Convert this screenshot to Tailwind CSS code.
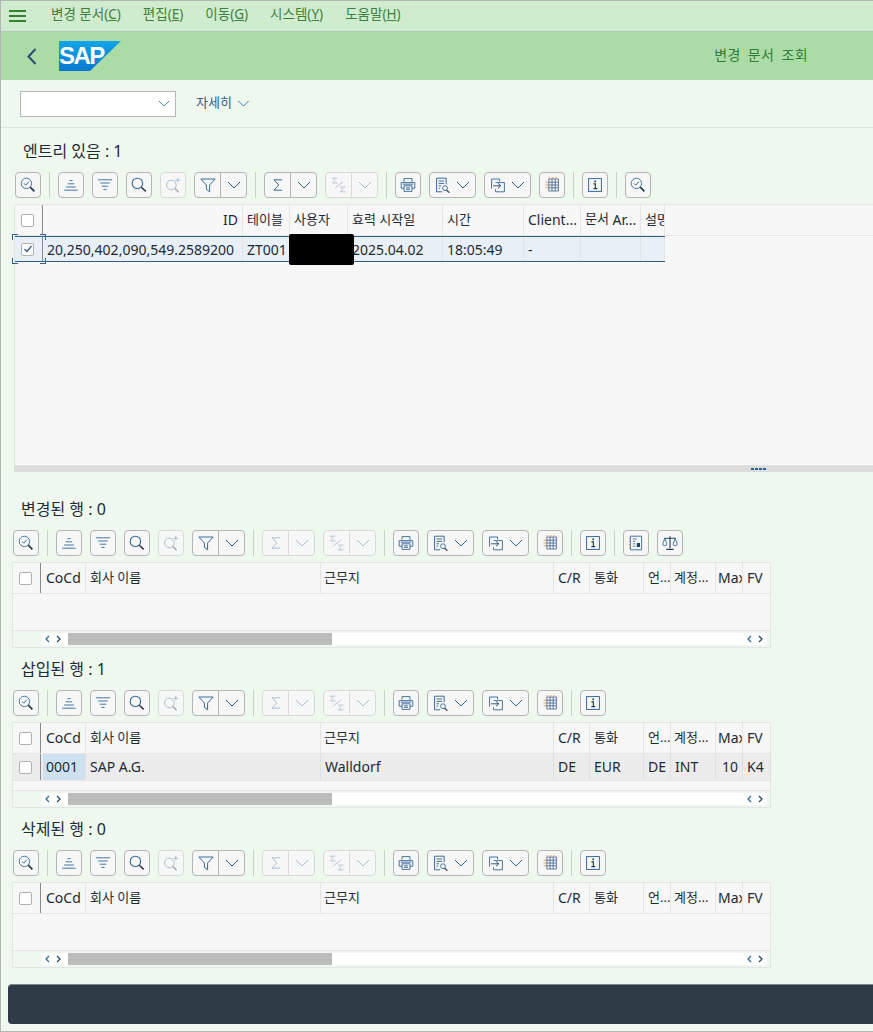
<!DOCTYPE html>
<html lang="ko">
<head>
  <meta charset="UTF-8">
  <title>변경 문서 조회</title>
  <script src="https://cdn.jsdelivr.net/npm/@tailwindcss/browser@4"></script>
</head>
<body class="bg-[#eef8ef]">
  <!-- Icon sprite -->
  <svg class="hidden">
    <symbol id="i-zoomcheck" viewBox="0 0 20 20"><circle cx="8" cy="8" r="6.5" fill="none" stroke="#2f6497" stroke-width="1.100"/><path d="M5 8l2.200 2.200L11 5.800" fill="none" stroke="#2f6497" stroke-width="1.200"/><path d="M12.800 12.800l5.200 5.200" stroke="#2b3a4a" stroke-width="2.200"/></symbol>
    <symbol id="i-asc" viewBox="0 0 20 20"><path d="M8 4.500h4M6 8.500h8M4 12.500h12M1.500 16.500h17" stroke="#2f6497" stroke-width="1.100"/></symbol>
    <symbol id="i-desc" viewBox="0 0 20 20"><path d="M1 3.500h18M4 7.500h12M6 11.500h8M8 15.500h4" stroke="#2f6497" stroke-width="1.100"/></symbol>
    <symbol id="i-search" viewBox="0 0 20 20"><circle cx="8" cy="8" r="6.500" fill="none" stroke="#2f6497" stroke-width="1.300"/><path d="M12.800 12.800l5.700 5.200" stroke="#2b3a4a" stroke-width="2"/></symbol>
    <symbol id="i-searchplus" viewBox="0 0 20 20"><circle cx="8" cy="10" r="6" fill="none" stroke="#2f6497" stroke-width="1.200"/><path d="M12.500 14.500l4.500 4.500" stroke="#2b3a4a" stroke-width="1.800"/><path d="M16 1v6M13 4h6" stroke="#2f6497" stroke-width="1.100"/></symbol>
    <symbol id="i-filter" viewBox="0 0 20 20"><path d="M1 2.500h18l-7 7.500v8.500l-4-3V10z" fill="none" stroke="#2f6497" stroke-width="1.200"/></symbol>
    <symbol id="i-chev" viewBox="0 0 14 8"><path d="M1 1l6 6 6-6" fill="none" stroke="#2f6497" stroke-width="1"/></symbol>
    <symbol id="i-sum" viewBox="0 0 20 20"><path d="M15 3.500H5l6 6.500-6 6.500h10" fill="none" stroke="#2f6497" stroke-width="1.200"/></symbol>
    <symbol id="i-subsum" viewBox="0 0 20 20"><path d="M8 1.500H2l3 3-3 3h6M18 12.500h-6l3 3-3 3h6" fill="none" stroke="#2f6497" stroke-width="1"/><path d="M5 14L15 6" stroke="#2f6497" stroke-width="1"/></symbol>
    <symbol id="i-print" viewBox="0 0 20 20"><path d="M5 6V2h10v4M5 14H1.500V7h17v7H15M5 11h10v7H5zM7.500 13.500h5M7.500 15.500h5M3.500 9h13" fill="none" stroke="#2f6497" stroke-width="1.100"/></symbol>
    <symbol id="i-list" viewBox="0 0 20 20"><path d="M9 18.500H2V1.500h12V9M4.500 5h7M4.500 8h7M4.500 11h3M4.500 14h2" fill="none" stroke="#2f6497" stroke-width="1.200"/><circle cx="12.500" cy="14" r="3" fill="none" stroke="#2f6497" stroke-width="1.100"/><path d="M14.500 16.500l3.500 3" stroke="#2b3a4a" stroke-width="1.500"/></symbol>
    <symbol id="i-export" viewBox="0 0 20 20"><path d="M2 14.500V2.500h10v3M7 7h11v11.500H7V15" fill="none" stroke="#2f6497" stroke-width="1.100"/><path d="M4 11h9M10 8l3.500 3-3.500 3" fill="none" stroke="#24405f" stroke-width="1.100"/></symbol>
    <symbol id="i-grid" viewBox="0 0 20 20"><path d="M6 2.500h12v15H6zM6 6.500h12M6 10h12M6 13.500h12M10 2.500v15M14 2.500v15" fill="none" stroke="#3c5f86" stroke-width="1"/><path d="M2 6.500h3M2 10h3M2 13.500h3M6 1h2M10 1h2M14 1h2" stroke="#e08a2e" stroke-width="1"/></symbol>
    <symbol id="i-info" viewBox="0 0 20 20"><rect x="2" y="2" width="16" height="16" fill="none" stroke="#2f6497" stroke-width="1.200"/><path d="M8 8.500h2.500v6M8 14.500h5" fill="none" stroke="#24405f" stroke-width="1.500"/><path d="M9.200 4.500h2v2h-2z" fill="#24405f"/></symbol>
    <symbol id="i-doc" viewBox="0 0 20 20"><path d="M3 1.500h14v17H3z" fill="none" stroke="#2f6497" stroke-width="1.100"/><path d="M1 4h2M1 8h2M1 12h2M1 16h2" stroke="#e08a2e" stroke-width="1.100"/><path d="M6 5h5M6 8h3M6 11h3M6 14h3" stroke="#2f6497" stroke-width="1"/><path d="M11 10h4v5h-4z" fill="#24405f"/></symbol>
    <symbol id="i-scale" viewBox="0 0 20 20"><path d="M10 1.500v15M5.500 18h9M3 4h14" fill="none" stroke="#24405f" stroke-width="1.400"/><path d="M1 11l2.500-7L6 11a2.500 2.500 0 0 1-5 0zM14 11l2.500-7 2.500 7a2.500 2.500 0 0 1-5 0z" fill="none" stroke="#2f6497" stroke-width="1.100"/></symbol>
  </svg>

  <div class="relative flex h-[1032px] w-[873px] flex-col overflow-hidden border-t border-b border-l border-[#b5b5b5] font-['Noto_Sans','Noto_Sans_CJK_KR',sans-serif] text-[14px] text-[#1f2a33]">
    <!-- Menu bar -->
    <div class="flex h-[31px] shrink-0 items-center border-b border-[#b9c9b9] bg-[#cfeccf] text-[13.500px] text-[#3f7f3f]">
      <div class="ml-[8px] flex w-[17px] flex-col gap-[3px]">
        <span class="h-[2px] bg-[#35812f]"></span>
        <span class="h-[2px] bg-[#35812f]"></span>
        <span class="h-[2px] bg-[#35812f]"></span>
      </div>
      <div class="ml-[25px] flex gap-[22px] pb-[3px]">
        <span>변경 문서(<u>C</u>)</span>
        <span>편집(<u>E</u>)</span>
        <span>이동(<u>G</u>)</span>
        <span>시스템(<u>Y</u>)</span>
        <span>도움말(<u>H</u>)</span>
      </div>
    </div>

    <!-- Title bar -->
    <div class="flex h-[48px] shrink-0 items-center bg-[#abdca8]">
      <svg class="ml-[26px] h-[17px] w-[10px]" viewBox="0 0 10 17"><path d="M8.500 1L1.500 8.500 8.500 16" fill="none" stroke="#2d4a70" stroke-width="2"/></svg>
      <div class="relative ml-[22px] h-[30px] w-[62px] bg-gradient-to-b from-[#11a5e8] to-[#0a78d0] [clip-path:polygon(0_0,100%_0,50%_100%,0_100%)]">
        <span class="absolute top-[2px] left-[0px] font-['Liberation_Sans',sans-serif] text-[24px] leading-[26px] font-bold tracking-[-1.500px] text-white">SAP</span>
      </div>
      <span class="mr-[65px] ml-auto pb-[3px] text-[14px] tracking-[0.400px] text-[#2f7d3a] [word-spacing:3px]">변경 문서 조회</span>
    </div>

    <!-- Filter bar -->
    <div class="flex h-[48px] shrink-0 items-center border-b border-[#dbe9dc] pl-[19px]">
      <div class="flex h-[26px] w-[156px] items-center justify-end border border-[#b5b5b5] bg-white pr-[5px]">
        <svg class="h-[7px] w-[12px]"><use href="#i-chev"/></svg>
      </div>
      <span class="ml-[20px] pb-[2px] text-[13px] text-[#346187]">자세히</span>
      <svg class="ml-[5px] h-[7px] w-[13px]"><use href="#i-chev"/></svg>
    </div>

    <!-- Entries -->
    <div class="flex h-[337px] shrink-0 flex-col pl-[13px]">
      <h2 class="flex h-[44px] shrink-0 items-end pb-[10px] pl-[9px] text-[16px] leading-[22px] font-normal">엔트리 있음 : 1</h2>
      <div id="tb-main" class="ml-[1px] flex h-[26px] shrink-0 gap-[8px]"></div>
      <div class="mt-[6px] flex flex-1 flex-col border-t border-l border-[#e5e5e5] bg-[#f7f7f7]">
        <div class="flex h-[31px] shrink-0 border-b border-[#e5e5e5]">
          <div class="flex w-[28px] items-center justify-center border-r border-[#8a8a8a] pr-[2px]"><span class="h-[13px] w-[13px] rounded-[2px] border border-[#b0b0b0] bg-white"></span></div>
          <div class="flex w-[200px] items-center justify-end border-r border-[#e5e5e5] pr-[4px] pb-[2px]">ID</div>
          <div class="flex w-[47px] items-center border-r border-[#e5e5e5] pl-[4px] text-[13px]">테이블</div>
          <div class="flex w-[58px] items-center border-r border-[#e5e5e5] pl-[4px] text-[13px]">사용자</div>
          <div class="flex w-[95px] items-center border-r border-[#e5e5e5] pl-[4px] text-[13px]">효력 시작일</div>
          <div class="flex w-[81px] items-center border-r border-[#e5e5e5] pl-[4px] text-[13px]">시간</div>
          <div class="flex w-[57px] items-center border-r border-[#e5e5e5] pb-[2px] pl-[4px]">Client...</div>
          <div class="flex w-[60px] items-center border-r border-[#e5e5e5] pb-[2px] pl-[4px]"><span class="text-[13px]">문서</span>&nbsp;Ar...</div>
          <div class="flex w-[24px] items-center overflow-hidden border-r border-[#e5e5e5] pl-[4px] text-[13px] whitespace-nowrap">설명</div>
        </div>
        <div class="relative flex h-[26px] w-[650px] shrink-0 border-y border-[#346187] bg-[#e8eff7]">
          <div class="flex w-[28px] items-center justify-center border-r border-[#8a8a8a] pr-[2px]">
            <span class="flex h-[13px] w-[13px] items-center justify-center rounded-[2px] border border-[#b0b0b0] bg-white">
              <svg class="h-[10px] w-[10px]" viewBox="0 0 10 10"><path d="M1.500 5l2.500 2.500L8.500 2" fill="none" stroke="#346187" stroke-width="1.300"/></svg>
            </span>
          </div>
          <div class="flex w-[200px] items-center justify-end border-r border-[#e5e5e5] pr-[8px]">20,250,402,090,549.2589200</div>
          <div class="flex w-[47px] items-center border-r border-[#e5e5e5] pl-[4px]">ZT001</div>
          <div class="w-[58px] border-r border-[#e5e5e5]"></div>
          <div class="flex w-[95px] items-center border-r border-[#e5e5e5] pl-[4px]">2025.04.02</div>
          <div class="flex w-[81px] items-center border-r border-[#e5e5e5] pl-[4px]">18:05:49</div>
          <div class="flex w-[57px] items-center border-r border-[#e5e5e5] pl-[4px]">-</div>
          <div class="w-[60px] border-r border-[#e5e5e5]"></div>
          <div class="w-[24px] border-r border-[#e5e5e5]"></div>
          <!-- redacted user -->
          <div class="absolute top-[-3px] left-[274px] h-[31px] w-[65px] rounded-[2px] bg-black"></div>
          <!-- focus brackets -->
          <span class="absolute top-[-3px] left-[-3px] h-[6px] w-[6px] border-t border-l border-[#346187]"></span>
          <span class="absolute top-[-3px] left-[25px] h-[6px] w-[6px] border-t border-r border-[#346187]"></span>
          <span class="absolute bottom-[-3px] left-[-3px] h-[6px] w-[6px] border-b border-l border-[#346187]"></span>
          <span class="absolute bottom-[-3px] left-[25px] h-[6px] w-[6px] border-r border-b border-[#346187]"></span>
        </div>
      </div>
    </div>

    <!-- Splitter -->
    <div class="ml-[13px] flex h-[7px] shrink-0 items-center justify-end gap-[1px] border-t border-[#e3e3e3] bg-[#dcdcdc] pr-[107px]">
      <span class="h-[2px] w-[3px] bg-[#2f6497]"></span>
      <span class="h-[2px] w-[3px] bg-[#2f6497]"></span>
      <span class="h-[2px] w-[3px] bg-[#2f6497]"></span>
      <span class="h-[2px] w-[3px] bg-[#2f6497]"></span>
    </div>

    <!-- Changed rows -->
    <section class="pl-[11px]">
      <h2 class="flex h-[58px] items-end pb-[10px] pl-[9px] text-[16px] leading-[22px] font-normal">변경된 행 : 0</h2>
      <div id="tb-changed" class="ml-[1px] flex h-[26px] gap-[8px]"></div>
      <div id="grid-changed" class="mt-[6px]"></div>
    </section>

    <!-- Inserted rows -->
    <section class="pl-[11px]">
      <h2 class="flex h-[42px] items-end pb-[10px] pl-[9px] text-[16px] leading-[22px] font-normal">삽입된 행 : 1</h2>
      <div id="tb-inserted" class="ml-[1px] flex h-[26px] gap-[8px]"></div>
      <div id="grid-inserted" class="mt-[6px]"></div>
    </section>

    <!-- Deleted rows -->
    <section class="pl-[11px]">
      <h2 class="flex h-[42px] items-end pb-[10px] pl-[9px] text-[16px] leading-[22px] font-normal">삭제된 행 : 0</h2>
      <div id="tb-deleted" class="ml-[1px] flex h-[26px] gap-[8px]"></div>
      <div id="grid-deleted" class="mt-[6px]"></div>
    </section>

    <!-- Footer -->
    <div class="mt-[16px] ml-[7px] h-[40px] shrink-0 rounded-l-[4px] border-t border-[#7c8a90] bg-[#2f3b47]"></div>
  </div>

  <script>
    const btnOn = 'border-[#b5b5b5]';
    const btnOff = 'border-[#d9dbd9]';

    function icon(name, size, off) {
      return `<svg class="${off ? 'opacity-40' : ''}" width="${size}" height="${size}"><use href="#i-${name}"/></svg>`;
    }
    function chev(off) {
      return `<svg class="${off ? 'opacity-40' : ''}" width="14" height="8"><use href="#i-chev"/></svg>`;
    }
    function btn(name, off) {
      return `<div class="flex h-[26px] w-[26px] items-center justify-center rounded-[4px] border bg-[#f7f7f7] ${off ? btnOff : btnOn}">${icon(name, 16, off)}</div>`;
    }
    function split(name, off) {
      return `<div class="flex h-[26px] w-[53px] rounded-[4px] border bg-[#f7f7f7] ${off ? btnOff : btnOn}">
        <div class="flex w-[26px] items-center justify-center border-r ${off ? btnOff : btnOn}">${icon(name, 16, off)}</div>
        <div class="flex flex-1 items-center justify-center">${chev(off)}</div></div>`;
    }
    function menuBtn(name) {
      return `<div class="flex h-[26px] w-[47px] items-center justify-center gap-[5px] rounded-[4px] border bg-[#f7f7f7] ${btnOn}">${icon(name, 16)}${chev()}</div>`;
    }
    const sep = '<span class="h-[26px] w-[1px] bg-[#c9cfc9]"></span>';

    function toolbar(id, sumOff, extra) {
      document.getElementById(id).innerHTML = [
        btn('zoomcheck'), sep, btn('asc'), btn('desc'), btn('search'), btn('searchplus', true),
        split('filter'), sep, split('sum', sumOff), split('subsum', true), sep,
        btn('print'), menuBtn('list'), menuBtn('export'), btn('grid'), sep, btn('info'), extra
      ].join('');
    }

    toolbar('tb-main', false, sep + btn('zoomcheck'));
    toolbar('tb-changed', true, sep + btn('doc') + btn('scale'));
    toolbar('tb-inserted', true, '');
    toolbar('tb-deleted', true, '');

    const cols = [
      ['w-[45px]', 'CoCd', 'pl-[5px] pb-[2px]'],
      ['w-[235px]', '회사 이름', 'pl-[4px] text-[13px]'],
      ['w-[233px]', '근무지', 'pl-[3px] text-[13px]'],
      ['w-[36px]', 'C/R', 'pl-[4px] pb-[2px]'],
      ['w-[54px]', '통화', 'pl-[4px] text-[13px]'],
      ['w-[27px]', '언...', 'pl-[4px] text-[13px]'],
      ['w-[45px]', '계정...', 'pl-[3px] text-[13px]'],
      ['w-[27px]', 'Max', 'pl-[2px] pb-[2px]'],
      ['w-[28px]', 'FV', 'pl-[4px] pb-[2px]']
    ];
    const checkCell = '<div class="flex w-[28px] shrink-0 items-center justify-center border-r border-[#8a8a8a] pr-[2px]"><span class="h-[13px] w-[13px] rounded-[2px] border border-[#b0b0b0] bg-white"></span></div>';

    function scrollArrows() {
      return `<div class="flex w-[24px] shrink-0 items-center justify-center gap-[6px]">
        <svg width="5" height="8" viewBox="0 0 5 8"><path d="M4 1L1 4l3 3" fill="none" stroke="#2f6497" stroke-width="1.200"/></svg>
        <svg width="5" height="8" viewBox="0 0 5 8"><path d="M1 1l3 3-3 3" fill="none" stroke="#24405f" stroke-width="1.200"/></svg></div>`;
    }

    function grid(id, row) {
      const head = cols.map(c => `<div class="flex ${c[0]} shrink-0 items-center overflow-hidden border-r border-[#e5e5e5] whitespace-nowrap ${c[2]}">${c[1]}</div>`).join('');
      let body = '<div class="h-[36px]"></div>';
      if (row) {
        const cells = row.map((v, i) => `<div class="flex ${cols[i][0]} shrink-0 items-center overflow-hidden border-r border-[#e0e0e0] pb-[1px] whitespace-nowrap ${i === 0 ? 'ml-[2px] !w-[43px] bg-[#cfe0f0] pl-[3px]' : 'pl-[4px]'}">${v}</div>`).join('');
        body = `<div class="flex h-[27px] border-b border-[#e5e5e5] bg-[#ececec]">${checkCell}${cells}</div><div class="h-[9px]"></div>`;
      }
      document.getElementById(id).innerHTML = `<div class="w-[759px] border border-[#e5e5e5] bg-[#f7f7f7]">
        <div class="flex h-[31px] border-b border-[#e5e5e5]">${checkCell}${head}</div>
        ${body}
        <div class="flex h-[17px] border-t border-[#e3e3e3] bg-[#eef8ef]">
          <div class="w-[28px] shrink-0"></div>
          <div class="my-[2px] mr-[3px] flex flex-1 bg-white">${scrollArrows()}
            <div class="ml-[3px] w-[264px] bg-[#bcbcbc]"></div>
            <div class="flex-1"></div>${scrollArrows()}
          </div>
        </div></div>`;
    }

    grid('grid-changed');
    grid('grid-inserted', ['0001', 'SAP A.G.', 'Walldorf', 'DE', 'EUR', 'DE', 'INT', '<span class="ml-auto pr-[4px]">10</span>', 'K4']);
    grid('grid-deleted');
  </script>
</body>
</html>
